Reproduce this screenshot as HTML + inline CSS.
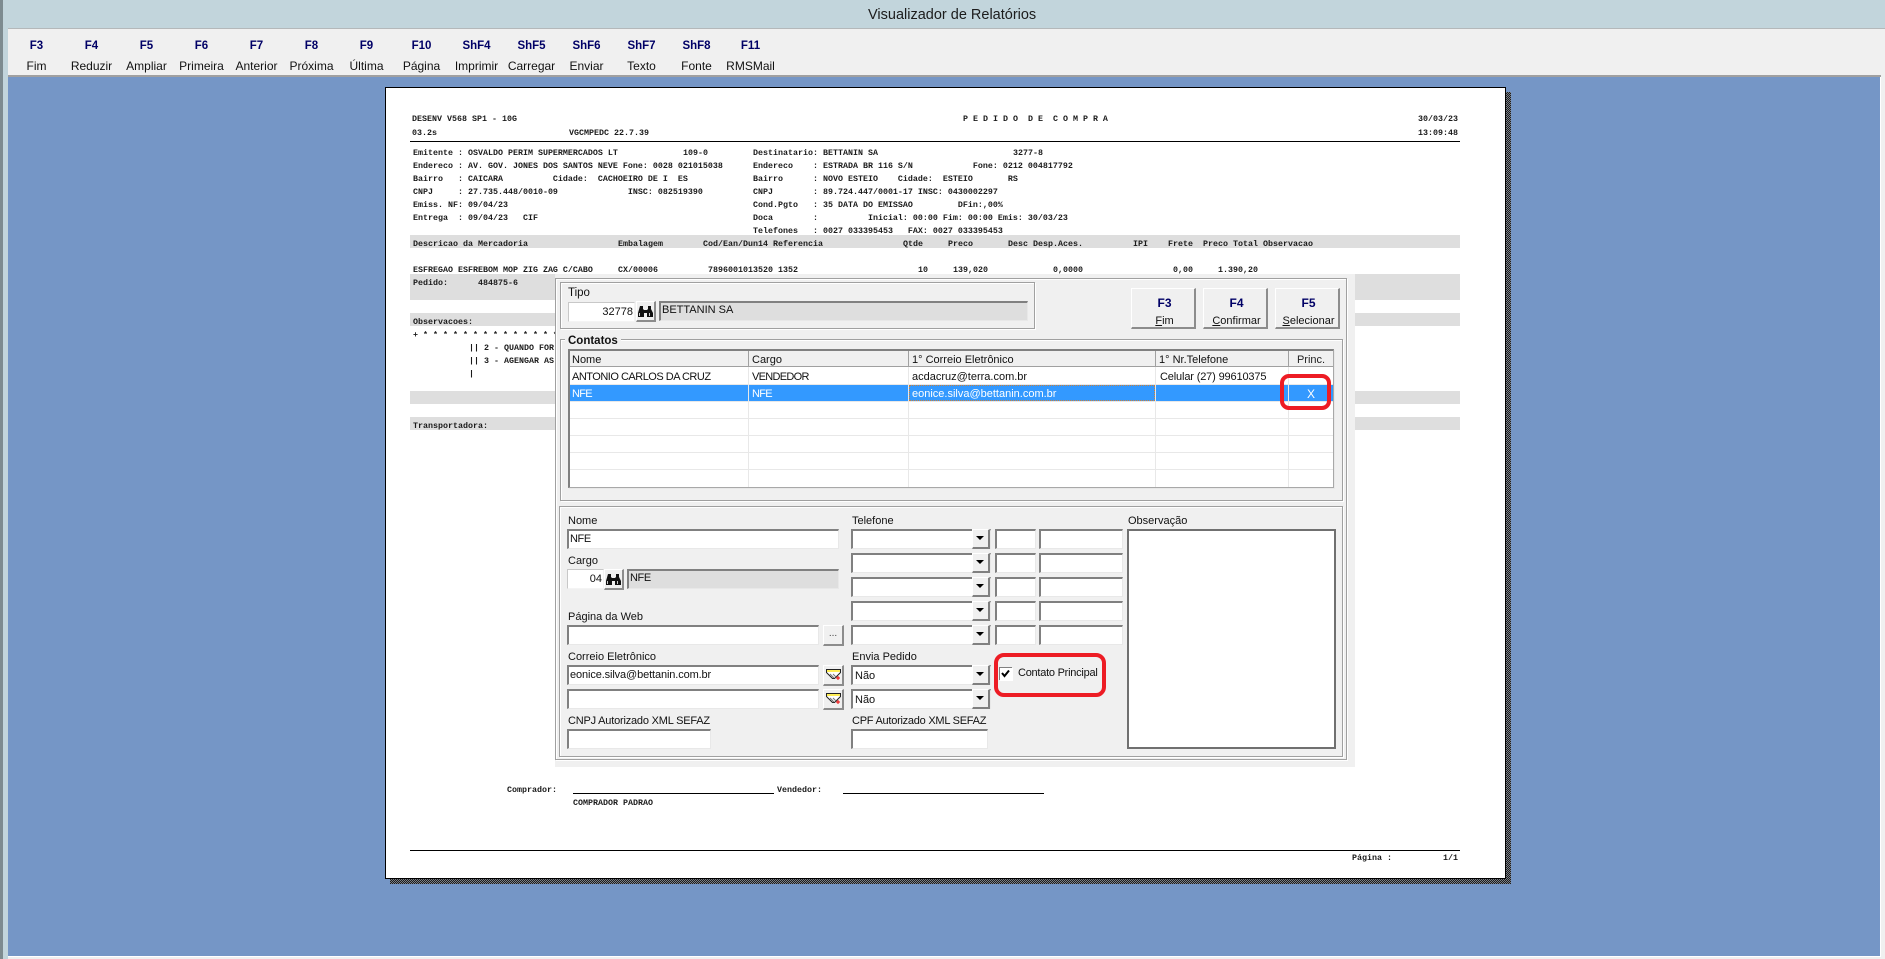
<!DOCTYPE html>
<html><head><meta charset="utf-8"><title>Visualizador de Relatórios</title>
<style>
html,body{margin:0;padding:0;width:1885px;height:959px;overflow:hidden;background:#f0f0f0}
div,span{box-sizing:border-box}
.a{position:absolute}
#r .t{position:absolute;margin-top:1px;font:bold 8.33px/13px "Liberation Mono",monospace;color:#1a1a1a;white-space:pre;height:13px}
.band{position:absolute;background:#dedede;left:410px;width:1050px}
.l{position:absolute;margin-top:1px;font:11px/14px "Liberation Sans",sans-serif;color:#111;white-space:pre}
.tb{position:absolute;width:55px;text-align:center;white-space:nowrap}
.k{position:absolute;left:0;width:100%;top:39px;font:bold 11.5px/14px "Liberation Sans",sans-serif;color:#000066}
.w{position:absolute;left:0;width:100%;top:59px;font:12px/14px "Liberation Sans",sans-serif;color:#111}
.in{position:absolute;background:#fff;border-style:solid;border-width:2px 1px 1px 2px;border-color:#808080 #e8e8e8 #e8e8e8 #808080;height:20px;font:11px/17px "Liberation Sans",sans-serif;color:#111;padding-left:1px;white-space:pre}
.in.lite{border-width:1px;border-color:#c8c8c8 #f4f4f4 #f4f4f4 #c8c8c8}
.gr{background:#dedede}
.btn{position:absolute;background:#f0f0f0;border-style:solid;border-width:1px 2px 2px 1px;border-color:#fff #8c8c8c #8c8c8c #fff}
.dd{position:absolute;right:0;top:-2px;width:18px;height:20px;background:#f0f0f0;border-style:solid;border-width:1px 2px 2px 1px;border-color:#fff #808080 #808080 #fff}
.dd:after{content:"";position:absolute;left:3px;top:6px;border-style:solid;border-width:4px 4px 0 4px;border-color:#000 transparent transparent transparent}
.gb{position:absolute;border:1px solid #a0a0a0;box-shadow:inset 1px 1px 0 #fff,1px 1px 0 #fff}
.cell{position:absolute;margin-top:1px;font:11px/16px "Liberation Sans",sans-serif;color:#111;white-space:pre;padding-left:3px;height:17px}
.red{position:absolute;border:4px solid #ed1c24;border-radius:9px}
.bk{position:absolute;left:0;width:65px;text-align:center;top:7px;font:bold 12px/14px 'Liberation Sans',sans-serif;color:#000066}
.bw{position:absolute;left:0;width:65px;text-align:center;top:25px;font:11px/14px 'Liberation Sans',sans-serif;color:#111}
</style></head>
<body>
<div class="a" style="left:0;top:0;width:1885px;height:959px;background:#f0f0f0"></div>
<!-- title -->
<div class="a" style="left:0;top:0;width:1885px;height:28px;background:#c2d5dc"></div>
<div class="a" style="left:0;top:28px;width:1885px;height:1px;background:#b4b8ba"></div>
<div class="a" style="left:868px;top:6px;font:14.5px/18px 'Liberation Sans',sans-serif;color:#1c1c1c;white-space:pre">Visualizador de Relatórios</div>
<!-- left strip -->
<div class="a" style="left:0;top:28px;width:8px;height:931px;background:#c2d5dc"></div>
<div class="a" style="left:0;top:0;width:3px;height:959px;background:#7d8b90"></div>
<!-- workspace -->
<div class="a" style="left:8px;top:75px;width:1873px;height:2px;background:#a0a0a0"></div>
<div class="a" style="left:8px;top:77px;width:1872px;height:879px;background:#7596c6"></div>
<div class="a" style="left:1880px;top:77px;width:1px;height:880px;background:#fff"></div>
<div class="a" style="left:8px;top:956px;width:1873px;height:1px;background:#fff"></div>
<!-- toolbar -->
<div class="tb" style="left:9px;top:0"><span class="k">F3</span><span class="w">Fim</span></div>
<div class="tb" style="left:64px;top:0"><span class="k">F4</span><span class="w">Reduzir</span></div>
<div class="tb" style="left:119px;top:0"><span class="k">F5</span><span class="w">Ampliar</span></div>
<div class="tb" style="left:174px;top:0"><span class="k">F6</span><span class="w">Primeira</span></div>
<div class="tb" style="left:229px;top:0"><span class="k">F7</span><span class="w">Anterior</span></div>
<div class="tb" style="left:284px;top:0"><span class="k">F8</span><span class="w">Próxima</span></div>
<div class="tb" style="left:339px;top:0"><span class="k">F9</span><span class="w">Última</span></div>
<div class="tb" style="left:394px;top:0"><span class="k">F10</span><span class="w">Página</span></div>
<div class="tb" style="left:449px;top:0"><span class="k">ShF4</span><span class="w">Imprimir</span></div>
<div class="tb" style="left:504px;top:0"><span class="k">ShF5</span><span class="w">Carregar</span></div>
<div class="tb" style="left:559px;top:0"><span class="k">ShF6</span><span class="w">Enviar</span></div>
<div class="tb" style="left:614px;top:0"><span class="k">ShF7</span><span class="w">Texto</span></div>
<div class="tb" style="left:669px;top:0"><span class="k">ShF8</span><span class="w">Fonte</span></div>
<div class="tb" style="left:723px;top:0"><span class="k">F11</span><span class="w">RMSMail</span></div>

<!-- page -->
<div class="a" style="left:390px;top:92px;width:1121px;height:792px;background:repeating-conic-gradient(#1c1c1c 0 25%,#7a7f88 0 50%) 0 0/2px 2px"></div>
<div class="a" style="left:385px;top:87px;width:1121px;height:792px;background:#fff;border:1px solid #000"></div>
<div id="r">
<div class="t" style="left:412px;top:112px">DESENV V568 SP1 - 10G</div>
<div class="t" style="left:963px;top:112px">P E D I D O  D E  C O M P R A</div>
<div class="t" style="left:1418px;top:112px">30/03/23</div>
<div class="t" style="left:412px;top:126px">03.2s</div>
<div class="t" style="left:569px;top:126px">VGCMPEDC 22.7.39</div>
<div class="t" style="left:1418px;top:126px">13:09:48</div>
<div class="a" style="left:410px;top:141px;width:1050px;height:1px;background:#000"></div>

<div class="t" style="left:413px;top:146px">Emitente : OSVALDO PERIM SUPERMERCADOS LT</div>
<div class="t" style="left:683px;top:146px">109-0</div>
<div class="t" style="left:753px;top:146px">Destinatario: BETTANIN SA</div>
<div class="t" style="left:1013px;top:146px">3277-8</div>
<div class="t" style="left:413px;top:159px">Endereco : AV. GOV. JONES DOS SANTOS NEVE Fone: 0028 021015038</div>
<div class="t" style="left:753px;top:159px">Endereco    : ESTRADA BR 116 S/N            Fone: 0212 004817792</div>
<div class="t" style="left:413px;top:172px">Bairro   : CAICARA          Cidade:  CACHOEIRO DE I  ES</div>
<div class="t" style="left:753px;top:172px">Bairro      : NOVO ESTEIO    Cidade:  ESTEIO       RS</div>
<div class="t" style="left:413px;top:185px">CNPJ     : 27.735.448/0010-09              INSC: 082519390</div>
<div class="t" style="left:753px;top:185px">CNPJ        : 89.724.447/0001-17 INSC: 0430002297</div>
<div class="t" style="left:413px;top:198px">Emiss. NF: 09/04/23</div>
<div class="t" style="left:753px;top:198px">Cond.Pgto   : 35 DATA DO EMISSAO         DFin:,00%</div>
<div class="t" style="left:413px;top:211px">Entrega  : 09/04/23   CIF</div>
<div class="t" style="left:753px;top:211px">Doca        :          Inicial: 00:00 Fim: 00:00 Emis: 30/03/23</div>
<div class="t" style="left:753px;top:224px">Telefones   : 0027 033395453   FAX: 0027 033395453</div>

<div class="band" style="top:235px;height:13px"></div>
<div class="t" style="left:413px;top:237px">Descricao da Mercadoria</div>
<div class="t" style="left:618px;top:237px">Embalagem</div>
<div class="t" style="left:703px;top:237px">Cod/Ean/Dun14 Referencia</div>
<div class="t" style="left:903px;top:237px">Qtde</div>
<div class="t" style="left:948px;top:237px">Preco</div>
<div class="t" style="left:1008px;top:237px">Desc Desp.Aces.</div>
<div class="t" style="left:1133px;top:237px">IPI</div>
<div class="t" style="left:1168px;top:237px">Frete</div>
<div class="t" style="left:1203px;top:237px">Preco Total Observacao</div>

<div class="t" style="left:413px;top:263px">ESFREGAO ESFREBOM MOP ZIG ZAG C/CABO</div>
<div class="t" style="left:618px;top:263px">CX/00006</div>
<div class="t" style="left:708px;top:263px">7896001013520 1352</div>
<div class="t" style="left:918px;top:263px">10</div>
<div class="t" style="left:953px;top:263px">139,020</div>
<div class="t" style="left:1053px;top:263px">0,0000</div>
<div class="t" style="left:1173px;top:263px">0,00</div>
<div class="t" style="left:1218px;top:263px">1.390,20</div>

<div class="band" style="top:274px;height:26px"></div>
<div class="t" style="left:413px;top:276px">Pedido:</div>
<div class="t" style="left:478px;top:276px">484875-6</div>
<div class="band" style="top:313px;height:13px"></div>
<div class="t" style="left:413px;top:315px">Observacoes:</div>
<div class="t" style="left:413px;top:328px">+ * * * * * * * * * * * * * *</div>
<div class="t" style="left:469px;top:341px">|| 2 - QUANDO FOR</div>
<div class="t" style="left:469px;top:354px">|| 3 - AGENGAR AS</div>
<div class="t" style="left:469px;top:367px">|</div>
<div class="band" style="top:391px;height:13px"></div>
<div class="band" style="top:417px;height:13px"></div>
<div class="t" style="left:413px;top:419px">Transportadora:</div>

<div class="t" style="left:507px;top:783px">Comprador:</div>
<div class="a" style="left:573px;top:793px;width:201px;height:1px;background:#000"></div>
<div class="t" style="left:777px;top:783px">Vendedor:</div>
<div class="a" style="left:843px;top:793px;width:201px;height:1px;background:#000"></div>
<div class="t" style="left:573px;top:796px">COMPRADOR PADRAO</div>
<div class="a" style="left:410px;top:850px;width:1050px;height:1px;background:#000"></div>
<div class="t" style="left:1352px;top:851px">Página :</div>
<div class="t" style="left:1443px;top:851px">1/1</div>
</div>

<!-- modal -->
<div class="a" style="left:555px;top:274px;width:800px;height:493px;background:#f0f0f0"></div>
<div class="gb" style="left:555px;top:278px;width:792px;height:482px"></div>
<div class="gb" style="left:560px;top:282px;width:475px;height:47px"></div>
<span class="l" style="left:568px;top:285px;font-size:11.5px">Tipo</span>
<div class="in lite" style="left:568px;top:302px;width:67px;text-align:right;padding-right:1px;line-height:18px">32778</div>
<div class="btn" style="left:636px;top:301px;width:20px;height:21px"><svg width="17" height="18" style="position:absolute;left:0;top:0"><path d="M3 4h3v3l1 1v7H1v-4z M11 4h3v3l2 4v4h-6V8l1-1z M7 8h3v3H7z" fill="#111"/><path d="M2.500 11v3M12.500 11v3" stroke="#ccc"/></svg></div>
<div class="in gr" style="left:659px;top:301px;width:369px;padding-left:1px;line-height:15px">BETTANIN SA</div>
<div class="btn" style="left:1131px;top:288px;width:65px;height:41px"><span class="bk">F3</span><span class="bw"><u>F</u>im</span></div>
<div class="btn" style="left:1203px;top:288px;width:65px;height:41px"><span class="bk">F4</span><span class="bw"><u>C</u>onfirmar</span></div>
<div class="btn" style="left:1275px;top:288px;width:65px;height:41px"><span class="bk">F5</span><span class="bw"><u>S</u>elecionar</span></div>

<div class="gb" style="left:560px;top:339px;width:783px;height:162px"></div>
<span class="l" style="left:565px;top:333px;background:#f0f0f0;padding:0 3px;font-weight:bold;font-size:11.5px">Contatos</span>

<!-- grid -->
<div class="a" style="left:568px;top:349px;width:766px;height:139px;background:#fff;border:solid #808080;border-width:2px 1px 1px 2px;border-color:#808080 #a8a8a8 #a8a8a8 #808080;box-shadow:1px 1px 0 #e8e8e8"></div>
<div class="a" style="left:570px;top:351px;width:763px;height:16px;background:#f0f0f0;border-bottom:1px solid #a0a0a0"></div>
<div class="a" style="left:570px;top:385px;width:763px;height:16px;background:#3399ff"></div>
<div class="a" style="left:570px;top:384px;width:763px;height:1px;background:#e8e8e8"></div>
<div class="a" style="left:570px;top:401px;width:763px;height:1px;background:#e8e8e8"></div>
<div class="a" style="left:570px;top:418px;width:763px;height:1px;background:#e8e8e8"></div>
<div class="a" style="left:570px;top:435px;width:763px;height:1px;background:#e8e8e8"></div>
<div class="a" style="left:570px;top:452px;width:763px;height:1px;background:#e8e8e8"></div>
<div class="a" style="left:570px;top:469px;width:763px;height:1px;background:#e8e8e8"></div>
<div class="a" style="left:748px;top:351px;width:1px;height:16px;background:#a0a0a0"></div>
<div class="a" style="left:908px;top:351px;width:1px;height:16px;background:#a0a0a0"></div>
<div class="a" style="left:1155px;top:351px;width:1px;height:16px;background:#a0a0a0"></div>
<div class="a" style="left:1288px;top:351px;width:1px;height:16px;background:#a0a0a0"></div>
<div class="a" style="left:748px;top:367px;width:1px;height:120px;background:#e8e8e8"></div>
<div class="a" style="left:908px;top:367px;width:1px;height:120px;background:#e8e8e8"></div>
<div class="a" style="left:1155px;top:367px;width:1px;height:120px;background:#e8e8e8"></div>
<div class="a" style="left:1288px;top:367px;width:1px;height:120px;background:#e8e8e8"></div>
<div class="a" style="left:909px;top:385px;width:246px;height:16px;border:1px dotted #c9803a"></div>
<span class="cell" style="left:569px;top:351px">Nome</span>
<span class="cell" style="left:749px;top:351px">Cargo</span>
<span class="cell" style="left:909px;top:351px">1° Correio Eletrônico</span>
<span class="cell" style="left:1156px;top:351px">1° Nr.Telefone</span>
<span class="cell" style="left:1289px;top:351px;width:44px;text-align:center;padding:0;color:#222">Princ.</span>
<span class="cell" style="left:569px;top:368px;letter-spacing:-.5px">ANTONIO CARLOS DA CRUZ</span>
<span class="cell" style="left:749px;top:368px;letter-spacing:-.7px">VENDEDOR</span>
<span class="cell" style="left:909px;top:368px">acdacruz@terra.com.br</span>
<span class="cell" style="left:1157px;top:368px;letter-spacing:-.15px">Celular (27) 99610375</span>
<span class="cell" style="left:569px;top:385px;color:#fff;letter-spacing:-.7px">NFE</span>
<span class="cell" style="left:749px;top:385px;color:#fff;letter-spacing:-.7px">NFE</span>
<span class="cell" style="left:909px;top:385px;color:#fff">eonice.silva@bettanin.com.br</span>
<span class="cell" style="left:1289px;top:385px;width:44px;text-align:center;padding:0;color:#fff;font-size:12px">X</span>
<div class="red" style="left:1280px;top:374px;width:51px;height:36px"></div>

<!-- form -->
<div class="gb" style="left:559px;top:506px;width:784px;height:251px"></div>

<span class="l" style="left:568px;top:513px">Nome</span>
<div class="in" style="left:567px;top:529px;width:272px;letter-spacing:-.4px">NFE</div>
<span class="l" style="left:568px;top:553px">Cargo</span>
<div class="in lite" style="left:567px;top:569px;width:37px;text-align:right;padding-right:1px;line-height:18px">04</div>
<div class="btn" style="left:604px;top:569px;width:20px;height:21px"><svg width="17" height="18" style="position:absolute;left:0;top:0"><path d="M3 4h3v3l1 1v7H1v-4z M11 4h3v3l2 4v4h-6V8l1-1z M7 8h3v3H7z" fill="#111"/><path d="M2.500 11v3M12.500 11v3" stroke="#ccc"/></svg></div>
<div class="in gr" style="left:627px;top:569px;width:212px;line-height:15px;letter-spacing:-.4px">NFE</div>
<span class="l" style="left:568px;top:609px">Página da Web</span>
<div class="in" style="left:567px;top:625px;width:252px"></div>
<div class="btn" style="left:823px;top:625px;width:21px;height:21px;font:10px/16px 'Liberation Sans',sans-serif;color:#444;text-align:center">...</div>
<span class="l" style="left:568px;top:649px">Correio Eletrônico</span>
<div class="in" style="left:567px;top:665px;width:252px;line-height:16px;letter-spacing:-.12px">eonice.silva@bettanin.com.br</div>
<div class="in" style="left:567px;top:689px;width:252px"></div>
<div class="btn" style="left:823px;top:665px;width:21px;height:21px"><svg width="18" height="16" style="position:absolute;left:1px;top:1px"><path d="M1.500 2.500h14v3l-6 6-2 0-6-6z" fill="#fff" stroke="#222"/><path d="M2 3h13v2H2z" fill="#ffee55"/><path d="M5 7l4 4M8 7l3 3" stroke="#777"/><path d="M13 9v4M11 11h4" stroke="#e00"/></svg></div>
<div class="btn" style="left:823px;top:689px;width:21px;height:21px"><svg width="18" height="16" style="position:absolute;left:1px;top:1px"><path d="M1.500 2.500h14v3l-6 6-2 0-6-6z" fill="#fff" stroke="#222"/><path d="M2 3h13v2H2z" fill="#ffee55"/><path d="M5 7l4 4M8 7l3 3" stroke="#777"/><path d="M13 9v4M11 11h4" stroke="#e00"/></svg></div>
<span class="l" style="left:568px;top:713px;letter-spacing:-.2px">CNPJ Autorizado XML SEFAZ</span>
<div class="in" style="left:567px;top:729px;width:144px"></div>

<span class="l" style="left:852px;top:513px">Telefone</span>
<div class="in" style="left:851px;top:529px;width:140px"><div class="dd"></div></div>
<div class="in" style="left:995px;top:529px;width:41px"></div>
<div class="in" style="left:1039px;top:529px;width:84px"></div>
<div class="in" style="left:851px;top:553px;width:140px"><div class="dd"></div></div>
<div class="in" style="left:995px;top:553px;width:41px"></div>
<div class="in" style="left:1039px;top:553px;width:84px"></div>
<div class="in" style="left:851px;top:577px;width:140px"><div class="dd"></div></div>
<div class="in" style="left:995px;top:577px;width:41px"></div>
<div class="in" style="left:1039px;top:577px;width:84px"></div>
<div class="in" style="left:851px;top:601px;width:140px"><div class="dd"></div></div>
<div class="in" style="left:995px;top:601px;width:41px"></div>
<div class="in" style="left:1039px;top:601px;width:84px"></div>
<div class="in" style="left:851px;top:625px;width:140px"><div class="dd"></div></div>
<div class="in" style="left:995px;top:625px;width:41px"></div>
<div class="in" style="left:1039px;top:625px;width:84px"></div>

<span class="l" style="left:852px;top:649px">Envia Pedido</span>
<div class="in" style="left:851px;top:665px;width:140px;padding-left:2px;line-height:18px">Não<div class="dd"></div></div>
<div class="in" style="left:851px;top:689px;width:140px;padding-left:2px;line-height:18px">Não<div class="dd"></div></div>
<span class="l" style="left:852px;top:713px;letter-spacing:-.25px">CPF Autorizado XML SEFAZ</span>
<div class="in" style="left:851px;top:729px;width:137px"></div>

<div class="a" style="left:999px;top:667px;width:13px;height:13px;background:#fff;border:solid #808080;border-width:1px 0 0 1px;box-shadow:1px 1px 0 #fff"></div>
<svg class="a" style="left:999px;top:667px" width="13" height="13"><path d="M3 6l2.500 3L10 3.500" fill="none" stroke="#000" stroke-width="2"/></svg>
<span class="l" style="left:1018px;top:665px;letter-spacing:-.25px">Contato Principal</span>
<div class="red" style="left:994px;top:653px;width:112px;height:44px;border-width:4px;border-radius:10px"></div>

<span class="l" style="left:1128px;top:513px">Observação</span>
<div class="a" style="left:1127px;top:529px;width:209px;height:220px;background:#fff;border:2px solid #707070"></div>
</body></html>
